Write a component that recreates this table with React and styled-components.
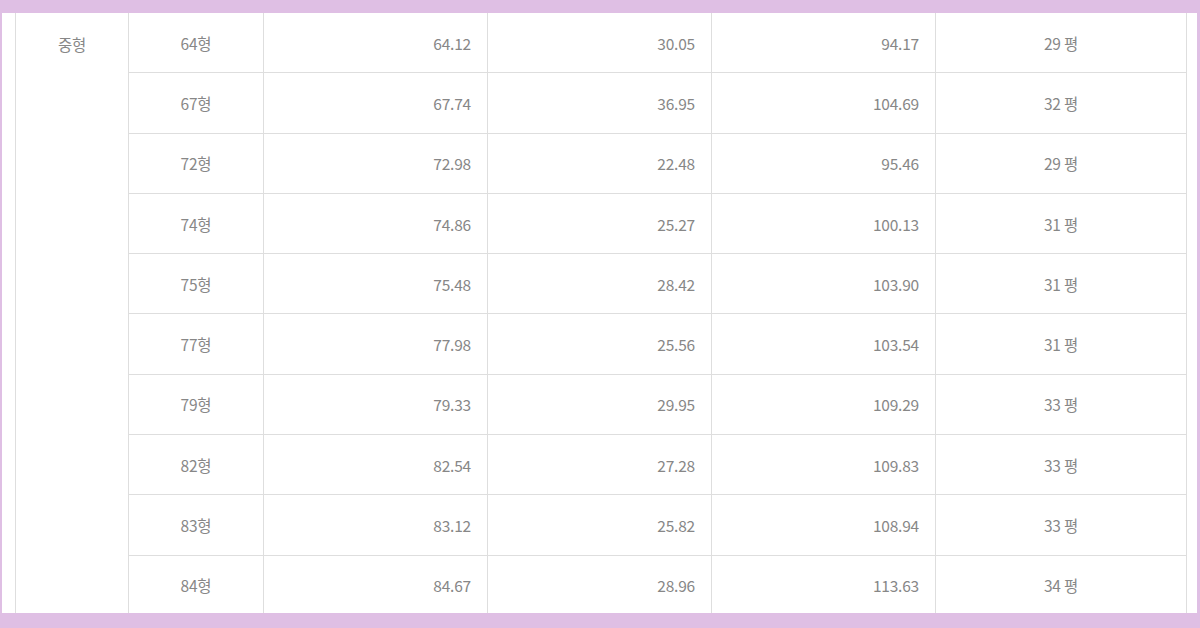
import React from "react";
import styled, { createGlobalStyle } from "styled-components";

const Global = createGlobalStyle`
  html, body { margin: 0; padding: 0; }
  body {
    background: #dfbfe4;
    font-family: "Noto Sans CJK KR", "Noto Sans", sans-serif;
  }
`;

const Frame = styled.div`
  width: 1200px;
  height: 628px;
  box-sizing: border-box;
  padding: 13px 3px 15px 2px;
  background: #dfbfe4;
`;

const Sheet = styled.div`
  height: 100%;
  background: #ffffff;
  overflow: hidden;
  padding-left: 13px;
`;

const Table = styled.table`
  width: 1172px;
  margin-top: -1px;
  border-collapse: collapse;
  table-layout: fixed;
  color: #878787;
  font-size: 15.5px;
  letter-spacing: -0.2px;
`;

const Col = styled.col`
  width: ${(p) => p.$w}px;
`;

const Row = styled.tr`
  height: 60.3px;
`;

const Cell = styled.td`
  border: 1px solid #dedede;
  padding: 0 16px;
  text-align: ${(p) => p.$align || "center"};
  vertical-align: ${(p) => (p.$top ? "top" : "middle")};
  padding-top: ${(p) => (p.$top ? "20px" : "0")};
  white-space: nowrap;
`;

const widths = [113, 135, 224, 224, 224, 251];

const rows = [
  ["64형", "64.12", "30.05", "94.17", "29 평"],
  ["67형", "67.74", "36.95", "104.69", "32 평"],
  ["72형", "72.98", "22.48", "95.46", "29 평"],
  ["74형", "74.86", "25.27", "100.13", "31 평"],
  ["75형", "75.48", "28.42", "103.90", "31 평"],
  ["77형", "77.98", "25.56", "103.54", "31 평"],
  ["79형", "79.33", "29.95", "109.29", "33 평"],
  ["82형", "82.54", "27.28", "109.83", "33 평"],
  ["83형", "83.12", "25.82", "108.94", "33 평"],
  ["84형", "84.67", "28.96", "113.63", "34 평"],
];

export default function App() {
  return (
    <>
      <Global />
      <Frame>
        <Sheet>
          <Table>
            <colgroup>
              {widths.map((w, i) => (
                <Col key={i} $w={w} />
              ))}
            </colgroup>
            <tbody>
              {rows.map((r, i) => (
                <Row key={r[0]}>
                  {i === 0 && (
                    <Cell rowSpan={rows.length} $top>
                      중형
                    </Cell>
                  )}
                  <Cell>{r[0]}</Cell>
                  <Cell $align="right">{r[1]}</Cell>
                  <Cell $align="right">{r[2]}</Cell>
                  <Cell $align="right">{r[3]}</Cell>
                  <Cell>{r[4]}</Cell>
                </Row>
              ))}
            </tbody>
          </Table>
        </Sheet>
      </Frame>
    </>
  );
}
